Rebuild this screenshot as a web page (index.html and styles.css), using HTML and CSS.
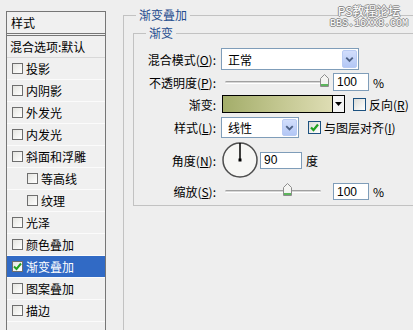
FILE: index.html
```html
<!DOCTYPE html>
<html lang="zh-CN">
<head>
<meta charset="UTF-8">
<title>图层样式 - 渐变叠加</title>
<link rel="stylesheet" href="styles.css">
</head>
<body>
<div class="dialog">
    <!-- style list on the left -->
    <div class="style-list">
        <div class="list-head">样式</div>
        <div class="list-item plain">混合选项:默认</div>
        <div class="list-item"><span class="box"></span>投影</div>
        <div class="list-item"><span class="box"></span>内阴影</div>
        <div class="list-item"><span class="box"></span>外发光</div>
        <div class="list-item"><span class="box"></span>内发光</div>
        <div class="list-item"><span class="box"></span>斜面和浮雕</div>
        <div class="list-item sub"><span class="box"></span>等高线</div>
        <div class="list-item sub"><span class="box"></span>纹理</div>
        <div class="list-item"><span class="box"></span>光泽</div>
        <div class="list-item"><span class="box"></span>颜色叠加</div>
        <div class="list-item selected"><span class="box"><svg width="9" height="9" viewBox="0 0 9 9"><path d="M1 4.5 L3.5 7 L8 1.5" fill="none" stroke="#21a121" stroke-width="2"/></svg></span>渐变叠加</div>
        <div class="list-item"><span class="box"></span>图案叠加</div>
        <div class="list-item"><span class="box"></span>描边</div>
    </div>

    <!-- settings panel -->
    <div class="settings">
        <div class="watermark">
            <div class="wm-title">PS教程论坛</div>
            <div class="wm-url">BBS.16XX8.COM</div>
        </div>
        <fieldset class="group outer">
            <legend>渐变叠加</legend>
            <fieldset class="group inner">
                <legend>渐变</legend>

                <div class="row row-blend">
                    <span class="label">混合模式(<u>O</u>):</span>
                    <div class="combo combo-wide">
                        <span class="combo-text">正常</span>
                        <span class="drop"><svg width="14" height="16" viewBox="0 0 14 16"><path d="M3.5 6.5 L7 10 L10.5 6.5" fill="none" stroke="#4d6185" stroke-width="2"/></svg></span>
                    </div>
                </div>

                <div class="row row-opacity">
                    <span class="label">不透明度(<u>P</u>):</span>
                    <div class="slider">
                        <div class="track"></div>
                        <svg class="thumb" style="left: 95px" width="9" height="13" viewBox="0 0 9 13"><path d="M0.5 4.5 L4.5 0.5 L8.5 4.5 L8.5 12.5 L0.5 12.5 Z" fill="#f4f4f2" stroke="#8c8c8c"/><rect x="1" y="10" width="7" height="2" fill="#5db55d"/></svg>
                    </div>
                    <input class="num" type="text" value="100">
                    <span class="unit">%</span>
                </div>

                <div class="row row-gradient">
                    <span class="label">渐变:</span>
                    <div class="gradient">
                        <div class="ramp"></div>
                        <div class="ramp-arrow"><svg width="7" height="4" viewBox="0 0 7 4"><path d="M0 0 L7 0 L3.5 4 Z" fill="#000"/></svg></div>
                    </div>
                    <span class="check"></span>
                    <span class="check-label">反向(<u>R</u>)</span>
                </div>

                <div class="row row-style">
                    <span class="label">样式(<u>L</u>):</span>
                    <div class="combo combo-narrow">
                        <span class="combo-text">线性</span>
                        <span class="drop"><svg width="14" height="15" viewBox="0 0 14 15"><path d="M3.5 6 L7 9.5 L10.5 6" fill="none" stroke="#4d6185" stroke-width="2"/></svg></span>
                    </div>
                    <span class="check checked"><svg width="11" height="11" viewBox="0 0 11 11"><path d="M2 5.5 L4.5 8 L9 2.5" fill="none" stroke="#21a121" stroke-width="2.2"/></svg></span>
                    <span class="check-label">与图层对齐(<u>I</u>)</span>
                </div>

                <div class="row row-angle">
                    <span class="label">角度(<u>N</u>):</span>
                    <svg class="dial" width="36" height="36" viewBox="0 0 36 36">
                        <circle cx="18" cy="18" r="17" fill="#f6f6f4" stroke="#4e4e4e" stroke-width="1.5"/>
                        <line x1="18" y1="18" x2="18" y2="1" stroke="#000" stroke-width="1.5"/>
                        <rect x="16.5" y="16.5" width="3" height="3" fill="#000"/>
                    </svg>
                    <input class="num num-angle" type="text" value="90">
                    <span class="unit">度</span>
                </div>

                <div class="row row-scale">
                    <span class="label">缩放(<u>S</u>):</span>
                    <div class="slider">
                        <div class="track"></div>
                        <svg class="thumb" style="left: 58px" width="9" height="13" viewBox="0 0 9 13"><path d="M0.5 4.5 L4.5 0.5 L8.5 4.5 L8.5 12.5 L0.5 12.5 Z" fill="#f4f4f2" stroke="#8c8c8c"/><rect x="1" y="10" width="7" height="2" fill="#5db55d"/></svg>
                    </div>
                    <input class="num" type="text" value="100">
                    <span class="unit">%</span>
                </div>
            </fieldset>
        </fieldset>
    </div>
</div>
</body>
</html>
```

FILE: styles.css
```css
body {
    margin: 0;
    width: 413px;
    height: 330px;
    overflow: hidden;
    background-color: #eeeeee;
    font-family: "Noto Sans CJK SC", "Liberation Sans", sans-serif;
    font-size: 12px;
    color: #000;
}
.dialog {
    display: flex;
    align-items: flex-start;
}

/* left list */
.style-list {
    margin: 11px 0 0 6px;
    width: 100px;
    height: 319px;
    box-sizing: border-box;
    border: 1px solid #767676;
    border-bottom: none;
    background-color: #f0f0f0;
    flex-shrink: 0;
    overflow: hidden;
}
.list-head {
    height: 21px;
    line-height: 21px;
    padding-left: 4px;
    border-bottom: 3px double #767676;
}
.list-item {
    display: flex;
    align-items: center;
    height: 21px;
    line-height: 21px;
    padding-left: 5px;
    border-bottom: 1px solid #fbfbfb;
    white-space: nowrap;
}
.list-item.plain {
    padding-left: 3px;
    border-bottom-color: #d8d8d8;
}
.list-item.sub {
    padding-left: 20px;
}
.list-item.selected {
    background-color: #316ac5;
    color: #fff;
}
.box {
    width: 11px;
    height: 11px;
    box-sizing: border-box;
    border: 1px solid #6e6e6e;
    background: linear-gradient(135deg, #e4e4e0, #ffffff);
    margin-right: 3px;
    display: flex;
    align-items: center;
    justify-content: center;
}

/* right side */
.settings {
    position: relative;
    margin-left: 17px;
    flex: 1;
}
.watermark {
    position: absolute;
    top: 3px;
    left: 205px;
    width: 82px;
    text-align: center;
    color: #ffffff;
    text-shadow: 1px 0 #8c8c8c, -1px 0 #8c8c8c, 0 1px #8c8c8c, 0 -1px #8c8c8c;
    z-index: 2;
}
.wm-title {
    font-size: 12px;
    line-height: 15px;
}
.wm-url {
    font-family: "Liberation Mono", monospace;
    font-size: 10px;
    line-height: 12px;
}

.group {
    margin: 0;
    min-inline-size: 0;
    border: 1px solid #c2c2c2;
    border-right: none;
}
.group legend {
    font-size: 12px;
    line-height: 14px;
    padding: 0 3px;
}
.outer {
    margin-top: 8px;
    width: 290px;
    height: 322px;
    box-sizing: border-box;
    border-bottom: none;
    padding: 0 0 0 9px;
}
.outer > legend {
    margin-left: 3px;
    color: #1f4d8e;
}
.inner {
    margin-top: 4px;
    padding: 8px 0 5px 0;
}
.inner > legend {
    margin-left: 12px;
    color: #1f4d8e;
}

.row {
    display: flex;
    align-items: center;
    white-space: nowrap;
}
.label {
    width: 82px;
    margin-right: 5px;
    text-align: right;
    flex-shrink: 0;
}
.row-blend { height: 22px; }
.row-opacity { height: 18px; margin-top: 3px; }
.row-gradient { height: 18px; margin-top: 4px; }
.row-style { height: 21px; margin-top: 4px; }
.row-angle { height: 36px; margin-top: 4px; }
.row-scale { height: 17px; margin-top: 5px; }

.combo {
    display: flex;
    align-items: center;
    box-sizing: border-box;
    height: 100%;
    border: 1px solid #7f9db9;
    background-color: #fff;
}
.combo-wide { width: 138px; }
.combo-narrow { width: 78px; }
.combo-text {
    padding-left: 6px;
}
.drop {
    margin-left: auto;
    margin-right: 1px;
    width: 15px;
    height: calc(100% - 2px);
    box-sizing: border-box;
    border: 1px solid #b9cbf3;
    border-radius: 2px;
    background: linear-gradient(#d2defc, #b3c7f5);
    display: flex;
    align-items: center;
    justify-content: center;
}

.slider {
    position: relative;
    width: 104px;
    height: 18px;
    margin-left: 4px;
    display: flex;
    align-items: center;
}
.track {
    width: 96px;
    height: 1px;
    border-top: 1px solid #a0a0a0;
    border-bottom: 1px solid #ffffff;
    background-color: #d6d6d6;
    border-radius: 2px;
}
.thumb {
    position: absolute;
    top: 1px;
}
.row-scale .thumb {
    top: 0;
}

.num {
    box-sizing: border-box;
    width: 36px;
    height: 18px;
    margin: 0 0 0 4px;
    padding: 0 0 0 3px;
    border: 1px solid #7f9db9;
    background-color: #fff;
    font-family: "Liberation Sans", sans-serif;
    font-size: 12px;
    color: #000;
    outline: none;
}
.row-scale .num {
    height: 17px;
}
.num-angle {
    width: 42px;
    height: 17px;
    margin-left: 2px;
}
.unit {
    margin-left: 4px;
}

.gradient {
    display: flex;
    box-sizing: border-box;
    width: 123px;
    height: 18px;
    margin-left: 1px;
    border: 1px solid #000;
}
.ramp {
    flex: 1;
    border-right: 1px solid #000;
    background: linear-gradient(to right, #a3ad6a, #c2c68f 50%, #deddb4);
}
.ramp-arrow {
    width: 11px;
    background-color: #f4f4f4;
    display: flex;
    align-items: center;
    justify-content: center;
}

.check {
    width: 13px;
    height: 13px;
    box-sizing: border-box;
    border: 1px solid #1c5180;
    background: linear-gradient(135deg, #dcdcd7, #ffffff);
    margin-left: 8px;
    margin-right: 3px;
    display: flex;
    align-items: center;
    justify-content: center;
    flex-shrink: 0;
}
.row-style .check {
    margin-left: 9px;
}

.dial {
    margin-left: 1px;
    flex-shrink: 0;
}
```
